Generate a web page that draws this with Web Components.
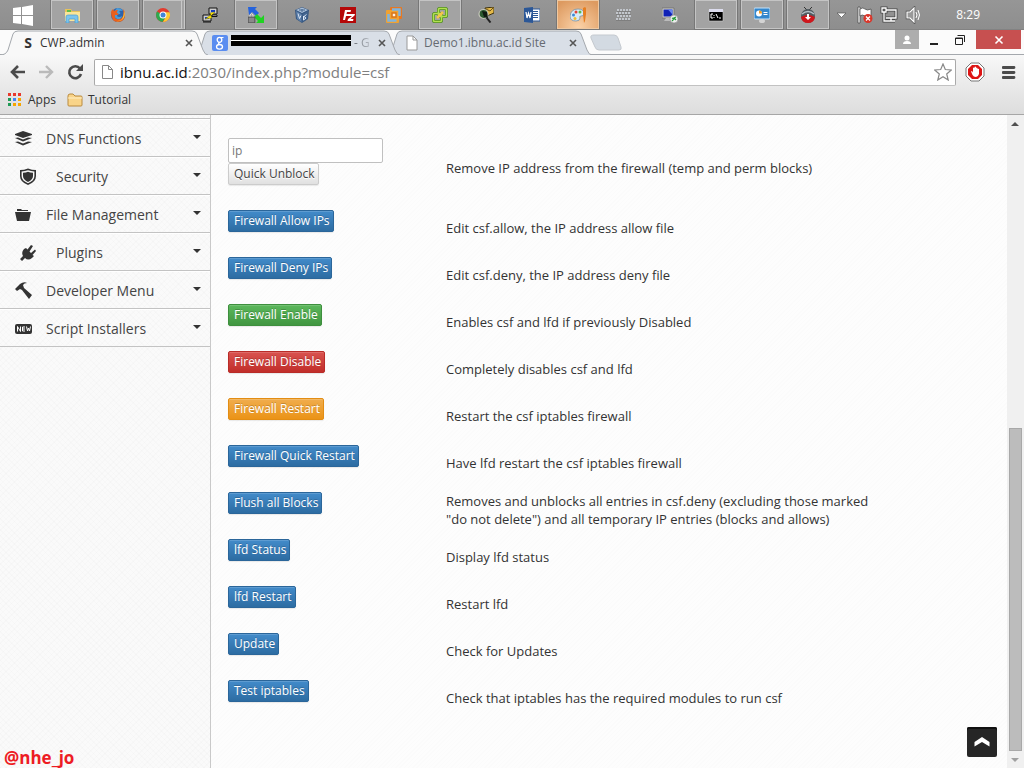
<!DOCTYPE html>
<html lang="en">
<head>
<meta charset="utf-8">
<title>CWP.admin</title>
<style>
  * { box-sizing: border-box; }
  html, body { height: 100%; }
  body {
    margin: 0;
    font-family: "Open Sans", "Noto Sans", sans-serif;
    font-size: 12px;
    color: #333333;
  }
</style>
</head>
<body>
<desktop-screen>
  <task-bar slot="taskbar"></task-bar>
  <browser-tabs slot="tabs"></browser-tabs>
  <browser-toolbar slot="toolbar"></browser-toolbar>
  <bookmark-bar slot="bookmarks"></bookmark-bar>
  <side-menu slot="sidebar"></side-menu>
  <firewall-table slot="content"></firewall-table>
  <scroll-bar slot="scroll"></scroll-bar>
</desktop-screen>

<script>
  const taskIcons = {
    explorer: `<path d="M1 2h6l1 2h8v10H1z" fill="#e8c35a"/><path d="M3 3h4v2H3z" fill="#5fbf4a"/><path d="M1 5h15v9H1z" fill="#fbe59a"/><path d="M2 16v-6q0-2 2-2h8q2 0 2 2v6h-3v-4H5v4z" fill="#7cc4ee" stroke="#4c9dcf" stroke-width=".7"/>`,
    firefox: `<circle cx="8" cy="8" r="7" fill="#2c63ad"/><path d="M7 1q4 0 6 3q-3-1-4 1q2 0 1 2q-3 0-3 2q2 2 5 0q-1 4-5 3q-4-2-3-7z" fill="#4a9cd8"/><path d="M1 5q0 10 7 10t7-8q0-3-2-5q1 4 0 7q-2 4-6 3q-3-1-2-4h3q1-2-1-2q0-2 1-3Q5 3 4 4L3 2Q1 4 1 5z" fill="#e8601e"/><path d="M14 4q2 4-1 8q-3 3-7 2q8 1 8-10z" fill="#f9c53b"/>`,
    chrome: `<circle cx="8" cy="8" r="7" fill="#e33b2e"/><path d="M2 4.5A7 7 0 0 0 7.5 15L11 9.5 8 8z" fill="#2da94f"/><path d="M8 15A7 7 0 0 0 14.500 5.200H8L11 9.500z" fill="#fcc934"/><circle cx="8" cy="8" r="3.500" fill="#fff"/><circle cx="8" cy="8" r="2.500" fill="#4285d8"/>`,
    putty: `<path d="M7 1h8v6H7zM1 8h8v6H1z" fill="#ccc" stroke="#111"/><path d="M9 3h4v2H9zM3 10h4v2H3z" fill="#123cc2"/><path d="M13 5L8 6l1 2-6 4 7-1-1-2z" fill="#ffe800" stroke="#655d00" stroke-width=".4"/><path d="M10 8h5v1.500h-5zM1 15h8" stroke="#111" fill="#eee"/>`,
    winscp: `<path d="M0 0h9L7 2l4 4-3 3-4-4-3 3z" fill="#2563dd"/><path d="M16 16H8l2-2-4-4 3-3 4 4 3-3z" fill="#1ed321"/><path d="M2 10V8q1.500-3 3 0v2" fill="none" stroke="#ddd"/><path d="M0 10h7v6H0z" fill="#777" stroke="#444" stroke-width=".6"/><path d="M1 12h5M1 14h5" stroke="#bbb" stroke-width=".6"/>`,
    vbox: `<path d="M8 0l7 3-1 9-6 4-6-4-1-9z" fill="#35557f"/><path d="M8 .5L14 3 8 6 2 3z" fill="#a9bfd8"/><path d="M2 4l5.500 3v8L3 12z" fill="#5d80ab"/><path d="M14 4L8.500 7v8l4.500-3z" fill="#43658f"/><path d="M4 6.500l1.500 5L7 8.500M9.500 9v4l2.500-2-2-1.500 2.500-2" fill="none" stroke="#dce7f5"/><path d="M5 3h6M8 2v3" stroke="#44648c"/>`,
    filezilla: `<path d="M0 0h16v16H0z" fill="#b50808"/><path d="M3 13L5 3h6l-.5 2H7l-.5 2h3l-.5 2H6l-1 4zM9 7h6l-.5 1.500-4 3.500h3l-.5 2H7.500l.5-2 4-3H9z" fill="#fff"/>`,
    vmware: `<rect x="4" y="0" width="12" height="12" rx="1" fill="#e77822"/><rect x="0" y="3" width="13" height="13" rx="1" fill="#f0a232"/><path d="M2.500 7v6.500h8M13.500 9V2.500H6" fill="none" stroke="#7fb4de" stroke-width="2.500"/><path d="M6 6h4v4H6z" fill="#fff2dd" stroke="#d9741a" stroke-width="1.500"/>`,
    vsphere: `<rect x="6.500" y="1.500" width="8" height="8" rx="1" fill="none" stroke="#4f8d20" stroke-width="3"/><rect x="1.500" y="6.500" width="8" height="8" rx="1" fill="none" stroke="#4f8d20" stroke-width="3"/><rect x="6.500" y="1.500" width="8" height="8" rx="1" fill="none" stroke="#b4df52" stroke-width="1.600"/><rect x="1.500" y="6.500" width="8" height="8" rx="1" fill="none" stroke="#b4df52" stroke-width="1.600"/><path d="M5 11l6-6" stroke="#f4c64a" stroke-width="2.500"/>`,
    search: `<path d="M7 1l9-1v6l-7 3z" fill="#e4b949" stroke="#3d3210"/><path d="M8 2l4 2 4-4" fill="none" stroke="#6b521b"/><circle cx="5.500" cy="7" r="4.500" fill="#2c5a30" stroke="#c7c7bb" stroke-width="1.200"/><path d="M8.500 10.500l4 5" stroke="#222" stroke-width="2"/><path d="M4 4l5 1 1 6-4-1z" fill="#101a11"/>`,
    word: `<path d="M8 2h8v12H8z" fill="#fff" stroke="#2b5797"/><path d="M9 4.500h5M9 6.500h5M9 8.500h5M9 10.500h5" stroke="#2b5797"/><path d="M0 1l9-1v16l-9-1z" fill="#2b5797"/><path d="M2 5l1 6 1.500-5L6 11l1-6" fill="none" stroke="#fff" stroke-width="1.200"/>`,
    paint: `<path d="M0 9q1-7 8-7 6 0 6 5 0 2-3 2-2 0-1 2 0 3-4 3-6 0-6-5z" fill="#d8ebf6" stroke="#7592a7" stroke-width=".8"/><circle cx="3.500" cy="8" r="1.500" fill="#3c8bd5"/><circle cx="6" cy="5" r="1.500" fill="#e34436"/><circle cx="10" cy="5" r="1.500" fill="#59b84b"/><circle cx="5" cy="11.500" r="1.500" fill="#eebe2c"/><path d="M13 7V1l2-1 1 1v6l-1 7-1 2z" fill="#e67e20"/>`,
    keyboard: `<path d="M1 3h14M0 6h15M1 9h14M0 12h15" stroke="#c2c6cc" stroke-width="2" stroke-dasharray="2 1"/><path d="M1 4.500h14M0 7.500h15M0 13.500h15" stroke="#777" stroke-width=".7"/>`,
    remote: `<path d="M0 1h12v10H0z" fill="#d9d9cf" stroke="#777"/><path d="M1.500 2.500h9v7h-9z" fill="#1022b6"/><path d="M6 2.500h4.500v5z" fill="#6986ef"/><path d="M4 11h5l1 3H2z" fill="#bbb"/><circle cx="12" cy="12" r="4" fill="#eee" stroke="#888" stroke-width=".6"/><path d="M10 11l2 1-2 2M14 10l-2 1 2 2" stroke="#249b38" fill="none" stroke-width="1.200"/>`,
    console: `<path d="M1 3h14v11H1z" fill="#000" stroke="#ccc" stroke-width=".6"/><path d="M1 2h14v3H1z" fill="#dde"/><path d="M5 7H3v4h2M6 8v1M6 10v1M8 7l2 4M11 11h2" stroke="#fff" fill="none"/>`,
    control: `<rect x="0" y="1" width="16" height="11" rx="1" fill="#3487cc" stroke="#c5e3fa"/><circle cx="5" cy="6.500" r="3" fill="#fff"/><path d="M5 6.500v-3A3 3 0 0 1 8 6.500z" fill="#f29a23"/><path d="M9.500 5.500h4M9.500 7.500h4" stroke="#fff"/><ellipse cx="8" cy="14" rx="3" ry="2" fill="#d4d4d4"/>`,
    downloader: `<path d="M4 0l3 3M12 0L9 3" stroke="#333"/><circle cx="8" cy="9" r="7" fill="#525b61"/><path d="M1 10q7-4 14 0-1 6-7 6t-7-6z" fill="#cf171d"/><path d="M2 7q6-5 12 0" stroke="#b3c0c7" fill="none" stroke-width="1.500"/><path d="M7 7h2v3h2l-3 3-3-3h2z" fill="#fff"/>`
  };

  class TaskBar extends HTMLElement {
    constructor() {
      super();
      this.attachShadow({ mode: 'open' });
    }

    connectedCallback() {
      const tasks = [
        ['explorer', 'open'], ['firefox', 'open'], ['chrome', 'open stacked'], ['putty', ''],
        ['winscp', 'open'], ['vbox', ''], ['filezilla', ''], ['vmware', ''], ['vsphere', 'open'],
        ['search', ''], ['word', ''], ['paint', 'open alert'], ['keyboard', ''], ['remote', ''],
        ['console', 'open'], ['control', 'open'], ['downloader', 'open']
      ];
      this.shadowRoot.innerHTML = `
<style>
  * { box-sizing: border-box; }
  :host {
    display: flex;
    height: 30px;
    background: linear-gradient(#969696, #8e8e8e);
    border-bottom: 1px solid #828282;
  }
  button { border: 1px solid transparent; background: none; padding: 0; margin: 0; }
  .start { width: 46px; height: 29px; margin-right: 5px; }
  .start svg { width: 22px; height: 22px; vertical-align: middle; }
  .tasks { display: flex; gap: 4px; flex: 1; }
  .task { width: 42px; height: 29px; display: flex; align-items: center; justify-content: center; }
  .task svg { width: 16px; height: 16px; }
  .open { background: #a3a3a3; border-color: #c4c4c4; outline: 1px solid #777777; outline-offset: 0; }
  .stacked { border-right: 4px double #c8c8c8; }
  .alert { background: radial-gradient(circle at 50% 100%, #fcd3a9, #dd9a60 90%); border-color: #eec8a1; }
  .tray { display: flex; align-items: center; gap: 6px; padding-right: 44px; }
  .tray svg { width: 18px; height: 18px; }
  time { color: #ffffff; font-size: 12px; padding-left: 28px; }
</style>
<button class="start" aria-label="Start"><svg viewBox="0 0 22 22" fill="#fff"><path d="M1 4l8-1v8H1zM10 3l11-2v10H10zM1 12h8v8l-8-1zM10 12h11v10l-11-2z"/></svg></button>
<div class="tasks">${tasks.map(([name, state]) => `
  <button class="task ${state}" aria-label="${name}"><svg viewBox="0 0 16 16">${taskIcons[name]}</svg></button>`).join('')}
</div>
<div class="tray">
  <svg viewBox="0 0 18 18"><path d="M5 7h9l-4.500 4.500z" fill="#fff" stroke="#555" stroke-width=".7"/></svg>
  <svg viewBox="0 0 18 18"><path d="M2 1h2v16H2z" fill="#fff" stroke="#444" stroke-width=".7"/><path d="M4 3q3-2 5 0t6 0v7q-3 2-6 0t-5 0z" fill="#fff" stroke="#444" stroke-width=".7"/><circle cx="12" cy="12.500" r="4.500" fill="#d93529"/><path d="M10 10.500l4 4M14 10.500l-4 4" stroke="#fff" stroke-width="1.300"/></svg>
  <svg viewBox="0 0 18 18" fill="none"><path d="M6 4h10v8H6M11 12v3M7 15h8M2 2h4v4H2zM4 6v9h3" stroke="#444" stroke-width="3"/><path d="M6 4h10v8H6M11 12v3M7 15h8M2 2h4v4H2zM4 6v9h3" stroke="#fff" stroke-width="1.300"/></svg>
  <svg viewBox="0 0 18 18"><path d="M3 6h3l4-4v14l-4-4H3z" fill="#aaa" stroke="#444" stroke-width="2.400"/><path d="M3 6h3l4-4v14l-4-4H3z" fill="#999" stroke="#fff" stroke-width="1.200"/><path d="M12 6q2 3 0 6M14 4q3 5 0 10" fill="none" stroke="#fff"/></svg>
  <time>8:29</time>
</div>`;
    }
  }

  class BrowserTab extends HTMLElement {
    constructor() {
      super();
      this.attachShadow({ mode: 'open' });
    }

    connectedCallback() {
      const active = this.hasAttribute('active');
      this.shadowRoot.innerHTML = `
<style>
  * { box-sizing: border-box; }
  :host {
    display: flex;
    position: relative;
    align-items: center;
    gap: 4px;
    width: 208px;
    height: 25px;
    margin-right: -16px;
    padding: 0 11px 0 20px;
    color: ${active ? '#333333' : '#666b72'};
    z-index: ${active ? 3 : 1};
  }
  :host([second]) { z-index: 2; }
  .shape { position: absolute; left: 0; top: 0; width: 100%; height: 100%; z-index: -1; }
  .title { flex: 1; display: flex; align-items: center; white-space: nowrap; }
  button { width: 16px; height: 16px; padding: 0; margin: 0; border: 0; background: none; }
  button svg { display: block; width: 16px; height: 16px; }
</style>
<svg class="shape" viewBox="0 0 208 25" preserveAspectRatio="none">
  <path d="M0 25Q6 25 8 20L13 4Q14 1 18 1H192Q196 1 197 4L203 20Q205 25 208 25" fill="${active ? '#f8f8f8' : '#d9dfe7'}" stroke="#a4a8ad"/>
</svg>
<slot name="icon"></slot>
<div class="title"><slot></slot></div>
<button aria-label="Close tab"><svg viewBox="0 0 16 16"><path d="M5 5l6 6M11 5l-6 6" stroke="#555" stroke-width="1.600"/></svg></button>`;
    }
  }

  class BrowserTabs extends HTMLElement {
    constructor() {
      super();
      this.attachShadow({ mode: 'open' });
    }

    connectedCallback() {
      this.shadowRoot.innerHTML = `
<style>
  * { box-sizing: border-box; }
  :host {
    display: flex;
    align-items: flex-start;
    height: 25px;
    background: #fbfbfb;
    box-shadow: inset 0 -1px #a4a8ad;
  }
  .tabs { display: flex; flex: 1; isolation: isolate; }
  .icon { width: 16px; height: 16px; flex: none; }
  .letter { width: 16px; text-align: center; font-size: 14px; font-weight: 700; color: #333333; }
  .redacted {
    flex: none;
    width: 120px;
    height: 11px;
    margin: 0 0 4px -1px;
    background: linear-gradient(#000 5px, #fff 5px, #fff 6px, #000 6px);
  }
  .fade {
    padding-left: 3px;
    background: linear-gradient(90deg, #555a61, #b8bdc4);
    background-clip: text;
    color: transparent;
  }
  .new { border: 0; padding: 0; background: none; width: 32px; height: 18px; margin: 4px 0 0 14px; }
  .new svg { display: block; }
  .controls { display: flex; }
  .controls button { border: 0; margin: 0; padding: 0; background: none; width: 26px; height: 19px; }
  .controls svg { display: block; margin: auto; }
  .controls .user { width: 24px; background: #adadad; margin-right: 2px; }
  .controls .close { width: 45px; background: #c75050; margin: 0 3px 0 3px; }
</style>
<div class="tabs">
  <browser-tab active><span slot="icon" class="letter">S</span>CWP.admin</browser-tab>
  <browser-tab second>
    <svg slot="icon" class="icon" viewBox="0 0 16 16"><rect width="16" height="16" rx="2" fill="#5a8df0"/><path d="M11.500 2.500H8.500" stroke="#fff"/><ellipse cx="7.500" cy="4.800" rx="2.300" ry="2.500" fill="none" stroke="#fff" stroke-width="1.300"/><path d="M7.500 7.300q-2 1 0 2" fill="none" stroke="#fff" stroke-width="1.300"/><ellipse cx="7.500" cy="11.800" rx="3" ry="2.300" fill="none" stroke="#fff" stroke-width="1.300"/></svg>
    <span class="redacted"></span><span class="fade">- G</span>
  </browser-tab>
  <browser-tab>
    <svg slot="icon" class="icon" viewBox="0 0 16 16"><path d="M3 1h6l4 4v10H3z" fill="#fff" stroke="#999"/><path d="M9 1v4h4" fill="none" stroke="#999"/></svg>
    Demo1.ibnu.ac.id Site
  </browser-tab>
  <button class="new" aria-label="New tab"><svg width="32" height="18" viewBox="0 0 32 18"><path d="M4 1h20q3 0 4 3l3 9q1 3-2 3H9q-3 0-4-3L1 4Q0 1 4 1z" fill="#d3dae2" stroke="#c4c9cf"/></svg></button>
</div>
<div class="controls">
  <button class="user" aria-label="User"><svg width="10" height="10" viewBox="0 0 10 10" fill="#fff"><circle cx="5" cy="3" r="2.500"/><path d="M1 9q0-3 4-3t4 3z"/></svg></button>
  <button aria-label="Minimize"><svg width="10" height="10" viewBox="0 0 10 10"><path d="M1 8h8v2H1z" fill="#222"/></svg></button>
  <button aria-label="Restore"><svg width="10" height="10" viewBox="0 0 10 10" fill="none" stroke="#222"><path d="M.5 3h7v6.500h-7z"/><path d="M.5 3.500h7M2.500 .5h7v6.500"/></svg></button>
  <button class="close" aria-label="Close"><svg width="10" height="10" viewBox="0 0 10 10"><path d="M1.500 1.500l7 7M8.500 1.500l-7 7" stroke="#fff" stroke-width="1.600"/></svg></button>
</div>`;
    }
  }

  class BrowserToolbar extends HTMLElement {
    constructor() {
      super();
      this.attachShadow({ mode: 'open' });
    }

    connectedCallback() {
      this.shadowRoot.innerHTML = `
<style>
  * { box-sizing: border-box; }
  :host {
    display: flex;
    align-items: center;
    height: 34px;
    padding: 0 6px;
    background: linear-gradient(#f8f8f8, #e8e8e8);
  }
  button { border: 0; margin: 0; padding: 0; background: none; width: 29px; height: 24px; }
  button svg { display: block; }
  .omnibox {
    flex: 1;
    display: flex;
    align-items: center;
    height: 27px;
    margin: 0 9px 0 1px;
    padding: 0 3px 0 5px;
    background: #ffffff;
    border: 1px solid #a9a9a9;
    border-bottom-color: #c2c2c2;
    border-radius: 2px;
  }
  .url { flex: 1; padding-left: 4px; font-size: 15px; line-height: 24px; color: #808080; white-space: nowrap; }
  .url b { font-weight: 400; color: #111111; }
  .omnibox button { width: 18px; height: 18px; }
  .block { width: 20px; height: 20px; margin-right: 17px; }
  .menu { width: 14px; height: 14px; margin-right: 2px; }
</style>
<button aria-label="Back"><svg width="22" height="24" viewBox="0 0 22 24"><path d="M19 12H6M12 6l-6 6 6 6" fill="none" stroke="#4b4b4b" stroke-width="2.600"/></svg></button>
<button aria-label="Forward"><svg width="22" height="24" viewBox="0 0 22 24"><path d="M4 12h13M11 6l6 6-6 6" fill="none" stroke="#bababa" stroke-width="2.400"/></svg></button>
<button aria-label="Reload"><svg width="22" height="24" viewBox="0 0 22 24"><path d="M16 8.500A6 6 0 1 0 17 14" fill="none" stroke="#4b4b4b" stroke-width="2.600"/><path d="M19 4v7h-7z" fill="#4b4b4b"/></svg></button>
<div class="omnibox">
  <svg width="16" height="18" viewBox="0 0 16 18"><path d="M2.500 2.500h6l4 4v9h-10z" fill="#fff" stroke="#888"/><path d="M8.500 2.500v4h4" fill="none" stroke="#888"/></svg>
  <div class="url"><b>ibnu.ac.id</b>:2030/index.php?module=csf</div>
  <button aria-label="Bookmark this page"><svg width="18" height="18" viewBox="0 0 18 18"><path d="M9 1l2.300 5.500 6 .5-4.600 4 1.500 6L9 13.700 3.800 17l1.500-6L.7 7l6-.5z" fill="#fff" stroke="#888" stroke-width="1.200"/></svg></button>
</div>
<button class="block" aria-label="Ad blocker"><svg width="20" height="20" viewBox="0 0 20 20"><path d="M6 1h8l5 5v8l-5 5H6l-5-5V6z" fill="#fff" stroke="#777"/><path d="M7 3h6l4 4v6l-4 4H7l-4-4V7z" fill="#dd1515"/><path d="M6 9.500l1-.5 1 1.500V6q.8-1 1.500 0V5q.8-1 1.500 0v1q.8-1 1.500 0v1q.8-.7 1.500 0v5q-1 3-3 3-2.500 0-3.500-2z" fill="#fff"/></svg></button>
<button class="menu" aria-label="Menu"><svg width="14" height="14" viewBox="0 0 14 14"><path d="M1 2.500h11M1 7.500h11M1 12.500h11" stroke="#4b4b4b" stroke-width="2.800" stroke-linecap="round"/></svg></button>`;
    }
  }

  class BookmarkBar extends HTMLElement {
    constructor() {
      super();
      this.attachShadow({ mode: 'open' });
    }

    connectedCallback() {
      const colors = ['#e8392c', '#e8392c', '#e8392c', '#1f9a55', '#4285f4', '#f6a500', '#1f9a55', '#f6a500', '#f6a500'];
      this.shadowRoot.innerHTML = `
<style>
  * { box-sizing: border-box; }
  :host {
    display: flex;
    gap: 11px;
    height: 26px;
    padding: 0 7px 4px;
    background: linear-gradient(#e8e8e8, #dddddd);
    border-bottom: 1px solid #a6a6a6;
  }
  a { display: flex; align-items: center; gap: 5px; color: #333333; text-decoration: none; }
</style>
<a href="#apps"><svg width="16" height="14" viewBox="0 0 16 14">${colors.map((color, i) => `<rect x="${1 + i % 3 * 5}" y="${Math.floor(i / 3) * 5}" width="3" height="3" fill="${color}"/>`).join('')}</svg>Apps</a>
<a href="#tutorial"><svg width="16" height="14" viewBox="0 0 16 14"><path d="M1 3q0-2 2-2h3l2 2h6q1 0 1 1v8q0 1-1 1H2q-1 0-1-1z" fill="#f9d489" stroke="#b98a3e"/><path d="M1 5h14" stroke="#fff0c6"/></svg>Tutorial</a>`;
    }
  }

  const menuIcons = {
    dns: `<path d="M9 1l9 3v1L9 8 1 5V4zM1 8l3-.5 5 2 5-2 4 .5-9 3.500zM1 12l3-.5 5 2 5-2 4 .5-9 3.500z"/>`,
    security: `<path d="M1 2q4 0 8-1.500Q13 2 17 2v6q0 6-8 9Q1 14 1 8zM2.600 3.500V8q0 4.700 6.400 7.300Q15.400 12.700 15.400 8V3.500Q12 3.300 9 2.200 6 3.300 2.600 3.500z" fill-rule="evenodd"/><path d="M4 4.700Q7 4.500 9 3.700q2 .8 5 1V8q0 3.500-5 6Q4 11.500 4 8z"/>`,
    files: `<path d="M3 5V3h4l1 1h6v1zM1 6h16l-2 9H3z"/>`,
    plugins: `<path d="M1 15l3-3Q2 8 5 5l2-1 1.500 1.500L12 1l2 1-3.500 5.500L12 9l4-3.500 1 1.500-3.500 4L15 12l-2 2q-4 3-7 0l-3 3z"/>`,
    developer: `<path d="M1 7l5-5q4-3 7-1-3 0-4 2l1 3 8 7-3 4-7-9-2-1-3 2z"/>`,
    scripts: `<rect x="1" y="4" width="17" height="10" rx="2"/><path d="M3.500 11.500v-5l3 5v-5M11 7H8.500v4H11M8.500 9H11M12.500 6.500l1 4.500 1-3 1 3 1-4.500" stroke="#fff" fill="none"/>`
  };

  class SideMenu extends HTMLElement {
    constructor() {
      super();
      this.attachShadow({ mode: 'open' });
    }

    connectedCallback() {
      const items = [
        ['dns', 'DNS Functions', ''],
        ['security', 'Security', 'nested'],
        ['files', 'File Management', ''],
        ['plugins', 'Plugins', 'nested'],
        ['developer', 'Developer Menu', ''],
        ['scripts', 'Script Installers', '']
      ];
      this.shadowRoot.innerHTML = `
<style>
  * { box-sizing: border-box; }
  :host {
    display: block;
    width: 211px;
    padding-top: 3px;
    border-right: 1px solid #c9c9c9;
    background:
      repeating-linear-gradient(45deg, rgba(0, 0, 0, 0.012) 0 1px, transparent 1px 4px),
      repeating-linear-gradient(-45deg, rgba(0, 0, 0, 0.012) 0 1px, transparent 1px 4px),
      #fafafa;
  }
  nav { border-top: 1px solid #c3c3c3; }
  a {
    display: flex;
    align-items: center;
    height: 38px;
    padding: 2px 9px 0 14px;
    border-bottom: 1px solid #c3c3c3;
    box-shadow: inset 0 1px #ffffff;
    color: #444444;
    font-size: 14px;
    text-decoration: none;
  }
  a.nested { padding-left: 19px; }
  .icon { width: 18px; height: 18px; margin-right: 14px; fill: #333333; }
  .nested .icon { margin-right: 19px; }
  span { flex: 1; white-space: nowrap; }
  .caret { width: 8px; height: 4px; margin-bottom: 4px; fill: #333333; }
</style>
<nav>${items.map(([icon, label, level]) => `
  <a class="${level}" href="#${icon}">
    <svg class="icon" viewBox="0 0 18 18">${menuIcons[icon]}</svg>
    <span>${label}</span>
    <svg class="caret" viewBox="0 0 8 4"><path d="M0 0h8L4 4z"/></svg>
  </a>`).join('')}
</nav>`;
    }
  }

  class CsfButton extends HTMLElement {
    constructor() {
      super();
      this.attachShadow({ mode: 'open' });
    }

    connectedCallback() {
      this.shadowRoot.innerHTML = `
<style>
  :host {
    display: block;
    --top: #428bca;
    --bottom: #2d6ca2;
    --line: #2b669a;
  }
  :host([kind="success"]) { --top: #5cb85c; --bottom: #419641; --line: #3e8f3e; }
  :host([kind="danger"]) { --top: #d9534f; --bottom: #c12e2a; --line: #b92c28; }
  :host([kind="warning"]) { --top: #f0ad4e; --bottom: #eb9316; --line: #e38d13; }
  button {
    display: block;
    height: 22px;
    margin: 0;
    padding: 0 3px 0 5px;
    border: 1px solid var(--line);
    border-radius: 2px;
    background: linear-gradient(var(--top), var(--bottom));
    box-shadow: inset 0 1px rgba(255, 255, 255, 0.15), 0 1px 1px rgba(0, 0, 0, 0.08);
    color: #ffffff;
    font: inherit;
    line-height: 18px;
    white-space: nowrap;
    text-shadow: 0 -1px rgba(0, 0, 0, 0.2);
  }
  :host([kind="default"]) { --top: #ffffff; --bottom: #e0e0e0; --line: #cccccc; }
  :host([kind="default"]) button { color: #444444; text-shadow: 0 1px #ffffff; }
</style>
<button type="button"><slot></slot></button>`;
    }
  }

  class FirewallTable extends HTMLElement {
    constructor() {
      super();
      this.attachShadow({ mode: 'open' });
    }

    connectedCallback() {
      const rows = [
        ['Firewall Allow IPs', 'Edit csf.allow, the IP address allow file', 'primary'],
        ['Firewall Deny IPs', 'Edit csf.deny, the IP address deny file', 'primary'],
        ['Firewall Enable', 'Enables csf and lfd if previously Disabled', 'success'],
        ['Firewall Disable', 'Completely disables csf and lfd', 'danger'],
        ['Firewall Restart', 'Restart the csf iptables firewall', 'warning'],
        ['Firewall Quick Restart', 'Have lfd restart the csf iptables firewall', 'primary'],
        ['Flush all Blocks', 'Removes and unblocks all entries in csf.deny (excluding those marked "do not delete") and all temporary IP entries (blocks and allows)', 'primary'],
        ['lfd Status', 'Display lfd status', 'primary'],
        ['lfd Restart', 'Restart lfd', 'primary'],
        ['Update', 'Check for Updates', 'primary'],
        ['Test iptables', 'Check that iptables has the required modules to run csf', 'primary']
      ];
      this.shadowRoot.innerHTML = `
<style>
  * { box-sizing: border-box; }
  :host { display: block; padding: 17px 17px 0; }
  table { width: 100%; border-collapse: collapse; }
  td { padding: 0; height: 47px; vertical-align: middle; line-height: 18px; }
  td:first-child { width: 218px; padding: 6px 0 0; vertical-align: top; }
  tr:first-child td { height: 72px; }
  p { margin: 0; max-width: 430px; font-size: 13px; }
  input {
    display: block;
    width: 155px;
    height: 25px;
    padding: 0 3px;
    border: 1px solid #c0c0c0;
    border-radius: 2px;
    background: #ffffff;
    color: #777777;
    font: inherit;
  }
</style>
<table>
  <tr>
    <td><input type="text" value="ip" aria-label="IP address"><csf-button kind="default">Quick Unblock</csf-button></td>
    <td><p>Remove IP address from the firewall (temp and perm blocks)</p></td>
  </tr>
  ${rows.map(([label, text, kind]) => `
  <tr>
    <td><csf-button kind="${kind}">${label}</csf-button></td>
    <td><p>${text}</p></td>
  </tr>`).join('')}
</table>`;
    }
  }

  class ScrollBar extends HTMLElement {
    constructor() {
      super();
      this.attachShadow({ mode: 'open' });
    }

    connectedCallback() {
      this.shadowRoot.innerHTML = `
<style>
  * { box-sizing: border-box; }
  :host { display: flex; flex-direction: column; width: 17px; padding: 0 2px; background: #f0f0f0; }
  svg { display: block; flex: none; width: 12px; height: 17px; }
  .track { flex: 296; }
  .thumb { flex: 322; background: #bcbcbc; border: 1px solid #a8a8a8; }
</style>
<svg viewBox="0 0 12 17"><path d="M2 11h8L6 7z" fill="#505050"/></svg>
<div class="track"></div>
<div class="thumb"></div>
<svg viewBox="0 0 12 17"><path d="M2 7h8l-4 4z" fill="#a0a0a0"/></svg>`;
    }
  }

  class DesktopScreen extends HTMLElement {
    constructor() {
      super();
      this.attachShadow({ mode: 'open' });
    }

    connectedCallback() {
      this.shadowRoot.innerHTML = `
<style>
  * { box-sizing: border-box; }
  :host { display: flex; flex-direction: column; min-height: 100%; position: relative; }
  .page { display: flex; flex: 1; }
  main {
    flex: 1;
    position: relative;
    background: repeating-linear-gradient(-45deg, rgba(0, 0, 0, 0.008) 0 1px, transparent 1px 3px), #fdfdfd;
  }
  .top {
    position: absolute;
    right: 10px;
    bottom: 11px;
    width: 30px;
    height: 30px;
    padding: 0;
    border: 0;
    border-radius: 2px;
    background: #262626;
    box-shadow: inset 0 2px #111111;
  }
  .top svg { display: block; margin: auto; }
  .signature {
    position: absolute;
    left: 4px;
    bottom: 0;
    font-size: 17px;
    font-weight: 700;
    line-height: 20px;
    color: #ed1c24;
  }
</style>
<slot name="taskbar"></slot>
<slot name="tabs"></slot>
<slot name="toolbar"></slot>
<slot name="bookmarks"></slot>
<div class="page">
  <slot name="sidebar"></slot>
  <main>
    <slot name="content"></slot>
    <button class="top" aria-label="Back to top"><svg width="16" height="10" viewBox="0 0 16 10"><path d="M.5 5L8 0l7.500 5v4.500L8 5 .5 9.500z" fill="#fff"/></svg></button>
  </main>
  <slot name="scroll"></slot>
</div>
<div class="signature">@nhe_jo</div>`;
    }
  }

  customElements.define('task-bar', TaskBar);
  customElements.define('browser-tab', BrowserTab);
  customElements.define('browser-tabs', BrowserTabs);
  customElements.define('browser-toolbar', BrowserToolbar);
  customElements.define('bookmark-bar', BookmarkBar);
  customElements.define('side-menu', SideMenu);
  customElements.define('csf-button', CsfButton);
  customElements.define('firewall-table', FirewallTable);
  customElements.define('scroll-bar', ScrollBar);
  customElements.define('desktop-screen', DesktopScreen);
</script>
</body>
</html>
